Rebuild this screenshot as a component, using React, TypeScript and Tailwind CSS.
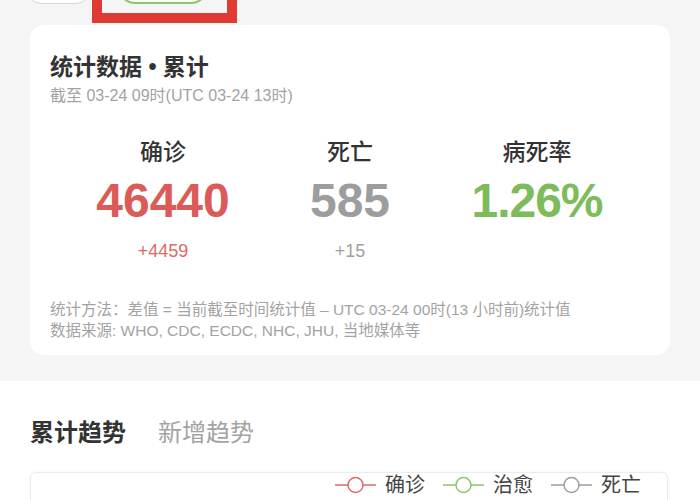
export default function App() {
  const font = { fontFamily: '"Liberation Sans", "Noto Sans CJK SC", sans-serif' };

  const stats = [
    { label: "确诊", value: "46440", delta: "+4459", color: "text-[#dc5a57]", deltaColor: "text-[#dc6a66]" },
    { label: "死亡", value: "585", delta: "+15", color: "text-[#9d9d9d]", deltaColor: "text-[#a0a0a0]" },
    { label: "病死率", value: "1.26%", delta: "", color: "text-[#7dbb5b] tracking-[-1px]", deltaColor: "" },
  ];

  const legend = [
    { name: "确诊", stroke: "#de6b68" },
    { name: "治愈", stroke: "#8cc66a" },
    { name: "死亡", stroke: "#9e9e9e" },
  ];

  return (
    <div className="w-[700px] h-[500px] overflow-hidden bg-white" style={font}>
      {/* grey top area */}
      <div className="bg-[#f5f5f5] pb-[26px]">
        {/* filter chips, cut off at the top */}
        <div className="flex items-start h-[25px] overflow-hidden">
          <div className="ml-[25px] w-[67px] h-[34px] shrink-0 rounded-full border border-[#d6d6d6] bg-white -mt-[30px]" />
          <div className="w-[145px] h-[50px] -mt-[27px] shrink-0 flex items-end border-[10px] border-t-0 border-[#e03a35] pl-[16px] pb-[9px]">
            <div className="w-[90px] h-[34px] rounded-full border-2 border-[#8cc66a] bg-white" />
          </div>
        </div>

        {/* stats card */}
        <div className="mx-[30px] bg-white rounded-[14px] pt-[52px] pb-[14px] px-[20px] relative">
          <div className="absolute left-[20px] top-[26px]">
            <h1 className="text-[23px] leading-[32px] font-bold text-[#333]">统计数据 • 累计</h1>
            <p className="text-[16px] leading-[20px] text-[#a3a3a3] mt-[3px]">截至 03-24 09时(UTC 03-24 13时)</p>
          </div>

          <div className="flex justify-center mt-[60px]">
            {stats.map((s) => (
              <div key={s.label} className="w-[187px] flex flex-col items-center">
                <div className="text-[23px] leading-[30px] font-medium text-[#333]">{s.label}</div>
                <div className={`text-[48px] leading-[52px] font-bold mt-[8px] ${s.color}`}>{s.value}</div>
                <div className={`text-[18px] leading-[20px] mt-[14px] h-[20px] ${s.deltaColor}`}>{s.delta}</div>
              </div>
            ))}
          </div>

          <div className="mt-[38px] text-[15.5px] leading-[21px] text-[#a3a3a3]">
            <p>统计方法：差值 = 当前截至时间统计值 – UTC 03-24 00时(13 小时前)统计值</p>
            <p>数据来源: WHO, CDC, ECDC, NHC, JHU, 当地媒体等</p>
          </div>
        </div>
      </div>

      {/* trends section */}
      <div className="px-[30px] pt-[36px]">
        <div className="flex items-center gap-[32px] text-[24px] leading-[32px]">
          <span className="font-bold text-[#333]">累计趋势</span>
          <span className="text-[#a3a3a3]">新增趋势</span>
        </div>

        <div className="mt-[23px] w-[638px] h-[60px] rounded-[6px] border border-[#ececec] shadow-[0_0_3px_rgba(0,0,0,0.05)]">
          <div className="flex justify-end items-center gap-[18px] pr-[26px] h-[24px]">
            {legend.map((l) => (
              <div key={l.name} className="flex items-center gap-[9px]">
                <svg width="41" height="18" viewBox="0 0 41 18">
                  <line x1="0" y1="9" x2="41" y2="9" stroke={l.stroke} strokeWidth="1.5" />
                  <circle cx="20.5" cy="9" r="7.5" fill="white" stroke={l.stroke} strokeWidth="1.5" />
                </svg>
                <span className="text-[20px] leading-[24px] text-[#444]">{l.name}</span>
              </div>
            ))}
          </div>
        </div>
      </div>
    </div>
  );
}
